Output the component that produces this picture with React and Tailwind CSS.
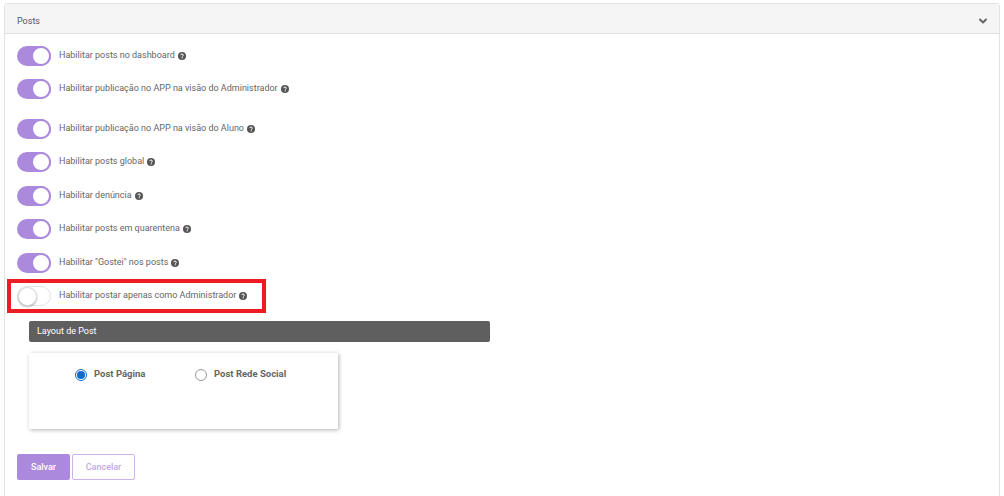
import React from "react";
import { ChevronDown } from "lucide-react";

const QuestionIcon = () => (
  <svg viewBox="0 0 16 16" className="w-[8px] h-[8px] ml-[3px] -mt-[1px] shrink-0">
    <circle cx="8" cy="8" r="8" fill="#555" />
    <path
      d="M5.4 6.2C5.5 4.8 6.6 4 8 4c1.5 0 2.7.9 2.7 2.2 0 1.9-2.2 1.9-2.2 3.2"
      fill="none"
      stroke="#fff"
      strokeWidth="2"
    />
    <rect x="7.3" y="10.6" width="2.2" height="2.2" fill="#fff" />
  </svg>
);

const Toggle = ({ on }) => (
  <div
    className={`w-[34px] h-[20px] rounded-full flex items-center shrink-0 ${
      on ? "bg-[#ab8ade] justify-end" : "bg-white border border-[#e4e4e4]"
    }`}
  >
    <div
      className={`rounded-full bg-white ${
        on
          ? "w-[20px] h-[20px] border-2 border-[#ab8ade]"
          : "w-[19px] h-[19px] border border-[#ddd] shadow-[0_1px_2px_rgba(0,0,0,0.3)]"
      }`}
    />
  </div>
);

const Row = ({ label, on = true, className = "" }) => (
  <div className={`flex items-center h-[20px] ${className}`}>
    <Toggle on={on} />
    <span className="ml-2 text-[#666] whitespace-nowrap -mt-[1px]">{label}</span>
    <QuestionIcon />
  </div>
);

const Radio = ({ checked, label, className = "" }) => (
  <div className={`flex items-center ${className}`}>
    <div
      className={`w-[12px] h-[12px] rounded-full border flex items-center justify-center bg-white ${
        checked ? "border-[#0a6ed1]" : "border-[#999]"
      }`}
    >
      {checked && <div className="w-[8px] h-[8px] rounded-full bg-[#0a6ed1]" />}
    </div>
    <span className="ml-[7px] font-bold text-[9.5px] text-[#666] leading-[10px] pb-[2px]">{label}</span>
  </div>
);

export default function App() {
  return (
    <div className="w-[1004px] h-[496px] overflow-hidden bg-white pt-[3px] pl-[4px] pr-[4px] text-[9px] font-['Roboto',sans-serif]">
      <div className="w-[996px] h-[500px] border border-[#e2e2e2] rounded-t-[3px]">
        <div className="h-[30px] bg-[#f5f5f5] border-b border-[#dfdfdf] flex items-center justify-between pl-3 pr-[10px] pt-[6px]">
          <span className="text-[#555]">Posts</span>
          <ChevronDown className="w-[12px] h-[12px] text-[#666] -mt-[2px]" strokeWidth={4} />
        </div>

        <div className="relative pl-3 pt-3">
          <Row label="Habilitar posts no dashboard" />
          <Row label="Habilitar publicação no APP na visão do Administrador" className="mt-[13px]" />
          <Row label="Habilitar publicação no APP na visão do Aluno" className="mt-[20px]" />
          <Row label="Habilitar posts global" className="mt-[13px]" />
          <Row label="Habilitar denúncia" className="mt-[14px]" />
          <Row label="Habilitar posts em quarentena" className="mt-[13px]" />
          <Row label='Habilitar "Gostei" nos posts' className="mt-[14px]" />
          <Row label="Habilitar postar apenas como Administrador" on={false} className="mt-[13px]" />

          {/* destaque vermelho */}
          <div className="absolute left-[2px] top-[245px] w-[259px] h-[34px] border-[4px] border-[#ed1c24]" />

          <div className="ml-3 mt-[15px] w-[461px] h-[21px] bg-[#5f5f5f] rounded-[2px] flex items-center pl-2 text-white">
            Layout de Post
          </div>

          <div className="ml-3 mt-[11px] w-[309px] h-[76px] bg-white shadow-[1px_1px_4px_rgba(0,0,0,0.3)] flex items-start pt-[16px] pl-[46px]">
            <Radio checked label="Post Página" className="w-[120px]" />
            <Radio label="Post Rede Social" />
          </div>

          <div className="flex mt-[25px] gap-[2px] font-medium">
            <button className="w-[53px] h-[26px] pt-[2px] bg-[#ab8ade] rounded-[2px] text-white">Salvar</button>
            <button className="w-[63px] h-[26px] pt-[2px] bg-white border border-[#ccb4ec] rounded-[2px] text-[#c3a8e8]">
              Cancelar
            </button>
          </div>
        </div>
      </div>
    </div>
  );
}
